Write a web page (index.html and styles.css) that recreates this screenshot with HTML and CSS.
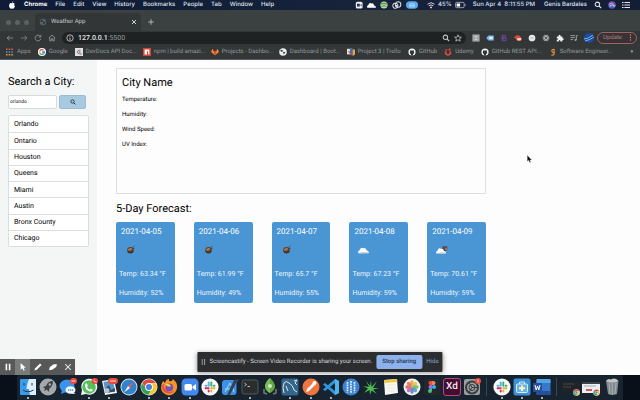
FILE: index.html
```html
<!DOCTYPE html>
<html lang="en">
<head>
<meta charset="utf-8">
<title>Weather App</title>
<link rel="stylesheet" href="styles.css">
</head>
<body>
<svg class="defs" aria-hidden="true">
  <symbol id="chrome" viewBox="0 0 18 18"><circle cx="9" cy="9" r="8.5" fill="#e8e9e4"/><path d="M2.3 5A7.8 7.8 0 0 1 15.7 5L9 5.2 5.8 11z" fill="#df4a3b"/><path d="M2 5.400A7.800 7.800 0 0 0 8.500 16.800L12 11 6 10.500z" fill="#35a156"/><path d="M16 5.400A7.800 7.800 0 0 1 8.500 16.800L12.300 10 11 5.400z" fill="#f6c934"/><circle cx="9" cy="9" r="3.900" fill="#fff"/><circle cx="9" cy="9" r="3" fill="#4480e0"/></symbol>
  <symbol id="slack" viewBox="0 0 18 18"><circle cx="9" cy="9" r="8.600" fill="#fafafa"/><g stroke-width="2" stroke-linecap="round"><path d="M7.700 4.500V7.700M4.500 7.700H5.500" stroke="#4fb9df"/><path d="M10.300 4.500V7.700M13.500 7.700H12.700" stroke="#3bae82"/><path d="M10.300 10.300H13.500M10.300 13.500V12.700" stroke="#e5b13b"/><path d="M4.500 10.300H7.700M7.700 13.500V12.700" stroke="#d32e60"/></g></symbol>
  <symbol id="github" viewBox="0 0 10 10"><circle cx="5" cy="5" r="4.500" fill="#f2f2f2"/><path d="M3.700 9.300V7.600C2 7 2 4.800 2.800 4.100L2.700 2.700 4 3.200H6L7.300 2.700 7.200 4.100C8 5 8 7 6.300 7.600V9.300z" fill="#303334"/></symbol>
  <symbol id="search" viewBox="0 0 10 10"><circle cx="4.200" cy="4.200" r="2.800" fill="none" stroke="currentColor" stroke-width="1.300"/><path d="M6.300 6.300L9 9" stroke="currentColor" stroke-width="1.500"/></symbol>
  <symbol id="ball" viewBox="0 0 12 12"><path d="M8 3.500L10 2M8.500 4.700L10 4.300" stroke="#4b4a50"/><circle cx="6" cy="6.300" r="3.300" fill="#5a4030"/><path d="M3.300 5.500Q5 3.300 7.600 4.300L7 6.300 4 6.700z" fill="#ad7a4c"/><path d="M3.200 7.500Q6 10 8.700 7.500" stroke="#2d2d35" fill="none"/></symbol>
  <symbol id="cloud" viewBox="0 0 14 9"><path d="M1.500 8Q.5 5.500 3 4.500Q4 1 7 2.500Q9.500 2 10.500 5Q13.500 6 12.500 8z" fill="#fcfcfc"/><path d="M2 8H12.500L11 6.700 5 7z" fill="#c6ccd1"/></symbol>
</svg>

<header class="menubar">
  <nav class="menus">
    <svg class="ico" viewBox="0 0 10 10"><path d="M6.600.3Q6.500 2 4.900 2.200Q5 .7 6.600.3M5 2.800Q7.200 1.700 8.400 3.400Q6.500 5 8.800 6.600Q7.400 9.800 6.300 9.600Q5 9 4 9.600C2.300 10 .8 6.700 1.600 4.500Q2.600 2.100 5 2.800" fill="#fff"/></svg>
    <b>Chrome</b><span>File</span><span>Edit</span><span>View</span><span>History</span><span>Bookmarks</span><span>People</span><span>Tab</span><span>Window</span><span>Help</span>
  </nav>
  <div class="status">
    <svg class="ico" viewBox="0 0 10 10"><rect x="1" y="1" width="8.500" height="8.500" rx="2" fill="#eee"/><path d="M2.500 3.500H6V7H2.500zM6.500 5L8.200 3.800V6.800z" fill="#26304a"/></svg>
    <svg class="ico wide" viewBox="0 0 14 9"><use href="#cloud"/></svg>
    <svg class="ico" viewBox="0 0 10 10"><circle cx="5" cy="5" r="4.500" fill="#b9d8a4"/><path d="M1 4Q5 2 9 4M2 7Q5 5 8 7" stroke="#4c9549" stroke-width="1.400" fill="none"/></svg>
    <svg class="ico wide" viewBox="0 0 14 10"><circle cx="5.500" cy="6" r="3.200" fill="none" stroke="#d7dbe1" stroke-width="1.300"/><circle cx="9" cy="4.500" r="3.500" fill="none" stroke="#d7dbe1" stroke-width="1.300"/><circle cx="7" cy="6" r="1" fill="#fff"/></svg>
    <svg class="ico pill" viewBox="0 0 16 10"><rect width="16" height="10" rx="5" fill="#5aaaf0"/><path d="M5 3.500V7.500H11V3.500z" fill="none" stroke="#c1e0fa"/><path d="M5 5.500H11" stroke="#c1e0fa"/></svg>
    <svg class="ico" viewBox="0 0 10 10"><path d="M.7 4Q5 .3 9.300 4M2.300 6Q5 3.800 7.700 6" fill="none" stroke="#ddd" stroke-width="1.200"/><circle cx="5" cy="8" r="1.200" fill="#ddd"/></svg>
    <span>45%</span>
    <svg class="ico wide" viewBox="0 0 14 8"><rect x=".6" y=".6" width="11" height="6.800" rx="1.500" fill="none" stroke="#bbc0c8"/><path d="M2 2H6.500V6H2z" fill="#fff"/><path d="M13 3V5" stroke="#bbc0c8"/></svg>
    <span class="clock">Sun Apr 4&nbsp; 8:11:55 PM</span>
    <span class="user">Genis Bardales</span>
    <svg class="ico end"><use href="#search"/></svg>
    <svg class="ico end" viewBox="0 0 10 10"><circle cx="5" cy="5" r="4.700" fill="#525ab5"/><path d="M1.500 5Q4 1 6 4T9 5" stroke="#ef77b2" stroke-width="1.700" fill="none"/><path d="M2 7Q5 3 8 7" stroke="#80e5ee" stroke-width="1.400" fill="none"/></svg>
    <svg class="ico end" viewBox="0 0 10 10"><path d="M0 2H2M3 2H10M0 5H2M3 5H10M0 8H2M3 8H10" stroke="#e5e7eb" stroke-width="1.300"/></svg>
  </div>
</header>

<div class="tabstrip">
  <div class="lights"><i></i><i></i><i></i></div>
  <div class="tab">
    <svg class="ico" viewBox="0 0 10 10"><circle cx="5" cy="5" r="4" fill="#55656a"/><path d="M2 3L5 2 4 5 2 5M6 4L8 5 6 8 5 6z" fill="#252e31"/></svg>
    <span>Weather App</span>
    <button class="plain" aria-label="Close tab"><svg class="mini" viewBox="0 0 6 6"><path d="M1 1L5 5M5 1L1 5" stroke="#d0d2d3"/></svg></button>
  </div>
  <button class="plain" aria-label="New tab"><svg class="mini" viewBox="0 0 6 6"><path d="M3 .3V5.700M.3 3H5.700" stroke="#aeb2b3"/></svg></button>
</div>

<div class="toolbar">
  <div class="nav">
    <button class="plain" aria-label="Back"><svg class="ico" viewBox="0 0 10 10"><path d="M9 5H1.500M4.500 2L1.500 5 4.500 8" fill="none" stroke="#9a9d9e"/></svg></button>
    <button class="plain" aria-label="Forward"><svg class="ico" viewBox="0 0 10 10"><path d="M1 5H8.500M5.500 2L8.500 5 5.500 8" fill="none" stroke="#85898a"/></svg></button>
    <button class="plain" aria-label="Reload"><svg class="ico" viewBox="0 0 10 10"><path d="M8 3A3.600 3.600 0 1 0 8.500 6M8.500 1V3.800H5.700" fill="none" stroke="#9a9d9e"/></svg></button>
    <button class="plain" aria-label="Home"><svg class="ico" viewBox="0 0 10 10"><path d="M1 5L5 1.300 9 5M2.300 4.500V8.700H4V6H6V8.700H7.700V4.500" fill="none" stroke="#9a9d9e"/></svg></button>
  </div>
  <div class="address">
    <svg class="ico" viewBox="0 0 10 10"><circle cx="5" cy="5" r="4" fill="none" stroke="#d5d7d8"/><path d="M5 4.500V7.500M5 2.500V3.500" stroke="#d5d7d8"/></svg>
    <span class="url"><b>127.0.0.1</b>:5500</span>
    <svg class="ico"><use href="#search"/></svg>
    <svg class="ico" viewBox="0 0 10 10"><path d="M5 1L6.200 3.900 9.300 4 6.900 6 7.700 9 5 7.300 2.300 9 3.100 6 .7 4 3.800 3.900z" fill="none" stroke="#c2c5c6"/></svg>
  </div>
  <div class="ext">
    <svg class="ico" viewBox="0 0 10 10"><rect x=".5" y=".5" width="9" height="9" fill="#a3a5a5"/><path d="M3 3H7M3 7H7M5 3V7" stroke="#d3d4d4"/></svg>
    <svg class="ico" viewBox="0 0 10 10"><path d="M.3 5L3 1.800H9.700V8.200H3z" fill="#76b4ef"/><path d="M4 3.500H8.500V6.500H4z" fill="#e6f2fd"/></svg>
    <svg class="ico" viewBox="0 0 10 10"><path d="M3 1V9M3 2H6.500V4.700H3M3 5H7.500V8H3" fill="none" stroke="#5c479b" stroke-width="1.500"/><path d="M2 5H5" stroke="#b33c62" stroke-width="1.500"/></svg>
    <svg class="ico" viewBox="0 0 10 10"><path d="M0 4L3 1.500 7 2 10 6 7 9 4 8z" fill="#d64c38"/><path d="M4 5H9V8H4z" fill="#f1cbc2"/></svg>
    <svg class="ico" viewBox="0 0 10 10"><circle cx="5" cy="5" r="4.200" fill="#e6e6e6"/><path d="M3 5H7" stroke="#aaa"/></svg>
    <svg class="ico" viewBox="0 0 10 10"><g fill="none" stroke="#aeb3b5"><ellipse cx="5" cy="5" rx="4" ry="1.700"/><ellipse cx="5" cy="5" rx="4" ry="1.700" transform="rotate(60 5 5)"/><ellipse cx="5" cy="5" rx="4" ry="1.700" transform="rotate(120 5 5)"/></g></svg>
    <svg class="ico" viewBox="0 0 10 10"><path d="M1 3H3.200Q3 .8 4.500 .8T5.800 3H8V5.200Q9.800 5 9.800 6.300T8 7.500V9.500H5.800Q5.500 7.500 4.500 7.500T3.200 9.500H1V7.200Q2.800 7 2.800 6.200T1 5.200z" fill="#f2f2f2"/></svg>
    <svg class="ico" viewBox="0 0 10 10"><path d="M.5 2H6.500M.5 4.500H6.500M.5 7H4M8 2V7.500M8 2H10" stroke="#a8abac"/><circle cx="7" cy="7.500" r="1.200" fill="#a8abac"/></svg>
    <svg class="ico avatar" viewBox="0 0 10 10"><circle cx="5" cy="5" r="5" fill="#1d4ba0"/><path d="M0 6Q4 6 9 2M1 8Q6 7 10 4" stroke="#7db1ed" fill="none"/></svg>
    <button class="update">Update <svg class="dots" viewBox="0 0 4 10"><circle cx="2" cy="1.500" r="1"/><circle cx="2" cy="5" r="1"/><circle cx="2" cy="8.500" r="1"/></svg></button>
  </div>
</div>

<nav class="bookmarks">
  <a href="#"><svg class="ico" viewBox="0 0 10 10"><g stroke-width="2" stroke-dasharray="2 1.300"><path d="M0 1.500H10" stroke="#df5949"/><path d="M0 5H10" stroke="#4c90c7"/><path d="M0 8.500H10" stroke="#d69c49"/></g></svg>Apps</a>
  <a href="#"><svg class="ico" viewBox="0 0 10 10"><circle cx="5" cy="5" r="5" fill="#fff"/><g fill="none" stroke-width="1.600"><path d="M2.400 3.600A3 3 0 0 1 7 2.700" stroke="#e14a3b"/><path d="M2.400 3.600A3 3 0 0 0 2.500 6.600" stroke="#f2ba2b"/><path d="M2.500 6.600A3 3 0 0 0 7 7.300" stroke="#34a853"/><path d="M7 7.300Q8 6.300 8 5H5" stroke="#4285f4"/></g></svg>Google</a>
  <a href="#"><svg class="ico" viewBox="0 0 10 10"><rect width="10" height="10" fill="#e2e2e2"/><path d="M5 3A2 2 0 1 0 5 7M6 2V7.500H8.500" fill="none" stroke="#636363"/></svg><span class="cut">DevDocs API Doc...</span></a>
  <a href="#"><svg class="ico" viewBox="0 0 10 10"><rect width="10" height="10" fill="#d94232"/><path d="M2 2H8V8H6.500V4H5V8H2z" fill="#fff"/></svg><span class="cut">npm | build amazi...</span></a>
  <a href="#"><svg class="ico" viewBox="0 0 10 10"><path d="M0 5L2 .8 3.500 4H6.500L8 .8 10 5 5 9z" fill="#f2863a"/><path d="M3 4H7L5 9z" fill="#dd4930"/></svg><span class="cut">Projects - Dashbo...</span></a>
  <a href="#"><svg class="ico" viewBox="0 0 10 10"><circle cx="5" cy="5" r="4.700" fill="#eee"/><path d="M2 2L5 3 4 5 2 4M5 5L8 5 6 8z" fill="#343738"/></svg><span class="cut">Dashboard | Boot...</span></a>
  <a href="#"><svg class="ico" viewBox="0 0 10 10"><path d="M0 1H4V8H0z" fill="#ebdfcf"/><path d="M4 0H7V9H4z" fill="#3a70bc"/><path d="M7 2H10V8L7 10z" fill="#e8a64c"/><path d="M2 4L5 8" stroke="#d55545" stroke-width="1.500"/></svg>Project 3 | Trello</a>
  <a href="#"><svg class="ico"><use href="#github"/></svg>GitHub</a>
  <a href="#"><svg class="ico" viewBox="0 0 10 10"><path d="M2 4V7Q5 10 8 7V4M2 2L4 3M6 3L8 1" fill="none" stroke="#df4c3f" stroke-width="2"/></svg>Udemy</a>
  <a href="#"><svg class="ico"><use href="#github"/></svg><span class="cut">GitHub REST API...</span></a>
  <a href="#"><svg class="ico" viewBox="0 0 10 10"><path d="M6.500 5.500A2 2 0 1 1 6.500 2V7Q6 9.500 3 8.500" fill="none" stroke="#d4883e" stroke-width="1.600"/></svg><span class="cut">Software Engineer...</span></a>
  <span class="more">»</span>
</nav>

<main class="page">
  <aside class="sidebar">
    <h2><label for="city">Search a City:</label></h2>
    <form class="search">
      <input id="city" type="text" value="orlando">
      <button type="button" aria-label="Search"><svg class="glass"><use href="#search"/></svg></button>
    </form>
    <ul class="cities"><li>Orlando</li><li>Ontario</li><li>Houston</li><li>Queens</li><li>Miami</li><li>Austin</li><li>Bronx County</li><li>Chicago</li></ul>
  </aside>
  <section class="content">
    <article class="current">
      <h2>City Name</h2>
      <p>Temperature:</p><p>Humidity:</p><p>Wind Speed:</p><p>UV Index:</p>
    </article>
    <h2 class="title">5-Day Forecast:</h2>
    <div class="forecast">
      <article class="day"><h3>2021-04-05</h3><svg class="weather"><use href="#ball"/></svg><p>Temp: 63.34 °F</p><p>Humidity: 52%</p></article>
      <article class="day"><h3>2021-04-06</h3><svg class="weather"><use href="#ball"/></svg><p>Temp: 61.99 °F</p><p>Humidity: 49%</p></article>
      <article class="day"><h3>2021-04-07</h3><svg class="weather"><use href="#ball"/></svg><p>Temp: 65.7 °F</p><p>Humidity: 55%</p></article>
      <article class="day"><h3>2021-04-08</h3><svg class="weather"><use href="#cloud"/></svg><p>Temp: 67.23 °F</p><p>Humidity: 59%</p></article>
      <article class="day"><h3>2021-04-09</h3><svg class="weather" viewBox="0 0 14 10"><path d="M8 1L13 1 13.500 4 12 6H8z" fill="#594c48"/><path d="M11 3H13V5H11z" fill="#b87850"/><use href="#cloud" y="1" width="13" height="9"/></svg><p>Temp: 70.61 °F</p><p>Humidity: 59%</p></article>
    </div>
  </section>

  <div class="recorder">
    <button aria-label="Pause"><svg class="ico" viewBox="0 0 10 10"><path d="M3 1V9M7 1V9" stroke="#fff" stroke-width="2"/></svg></button>
    <button class="on" aria-label="Pointer"><svg class="ico" viewBox="0 0 10 10"><path d="M2 0L8.500 6H5.800L7.200 9.200 5.700 9.800 4.300 6.700 2 8.500z" fill="#fff"/></svg></button>
    <button aria-label="Pen"><svg class="ico" viewBox="0 0 10 10"><path d="M.5 9.500L1.500 6.500 7.500.5 9.500 2.500 3.500 8.500z" fill="#fff"/></svg></button>
    <button aria-label="Eraser"><svg class="ico" viewBox="0 0 10 10"><path d="M0 9L1 5 6 1.500H10L9 5 4 8.500z" fill="#fff"/></svg></button>
    <button aria-label="Close"><svg class="ico" viewBox="0 0 10 10"><path d="M1.500 1.500L8.500 8.500M8.500 1.500L1.500 8.500" stroke="#e2e2e2" stroke-width="1.300"/></svg></button>
  </div>
  <div class="sharing">
    <svg class="bars" viewBox="0 0 4 6"><path d="M.7 0V6M3.300 0V6" stroke="#b0b2b4"/></svg>
    <span>Screencastify - Screen Video Recorder is sharing your screen.</span>
    <button class="stop">Stop sharing</button>
    <button class="hide">Hide</button>
  </div>
  <svg class="cursor" viewBox="0 0 5 8"><path d="M.3.300V6.300L1.700 5.200 2.700 7.600 3.700 7.100 2.800 4.900H4.700z" fill="#111" stroke="#bbb" stroke-width=".3"/></svg>
</main>

<footer class="desk">
  <div class="dock">
    <svg class="app run" viewBox="0 0 18 18"><rect x="1" y="1" width="16" height="16" rx="1" fill="#3a9bea"/><path d="M10 1H17V17H11Q10 14 10 11H7.500Q8 5 10 1" fill="#dfeefa"/><path d="M5 5V7.500M13 5V7.500M4 12Q9 15.500 14.500 12" fill="none" stroke="#1b3855"/></svg>
    <svg class="app" viewBox="0 0 18 18"><circle cx="9" cy="9" r="8.500" fill="#a5a8aa"/><path d="M14 3Q9 3 7 8L4 9 6 10.500 5 13 8 11.500 9.500 14 10.500 10.500Q14 8 14 3" fill="#3b4044"/><circle cx="10.800" cy="6.500" r="1.200" fill="#aaa"/></svg>
    <svg class="app" viewBox="0 0 18 18"><ellipse cx="8" cy="8" rx="7.500" ry="6.500" fill="#3c94ea"/><path d="M3 12L2 16 7 14" fill="#3c94ea"/><ellipse cx="11.500" cy="12" rx="5" ry="3.800" fill="#f3f8fd"/><path d="M14 14L16.500 16 12 15.500" fill="#f3f8fd"/><path d="M9 12H14.500" stroke="#4b8fcc" stroke-width="1.300" stroke-dasharray="1.300 .7"/><rect x="11" y="0" width="7" height="6" rx="3" fill="#ea4a3f"/><path d="M12.500 3H16.500" stroke="#f7aaa4" stroke-width="1.500"/></svg>
    <svg class="app run" viewBox="0 0 18 18"><path d="M1 17L2 12A8 8 0 1 1 6 16z" fill="#f3f7f2"/><circle cx="9" cy="9" r="6.800" fill="#55be5d"/><path d="M6 5L8 7.500 7 9Q8 11 10 11.500L11 10.500 13 12Q12 14 10 13.500Q5 12 5 7z" fill="#fff"/><rect x="11.500" y="0" width="6.500" height="6" rx="3" fill="#ea4a3f"/><path d="M14 1.500V3.500H16V5" fill="none" stroke="#ffc3bd" stroke-width=".8"/></svg>
    <svg class="app run" viewBox="0 0 18 18"><path d="M2 3L14 1 17 15 5 17z" fill="#f1f3f4"/><path d="M3.500 4L13 2.500 15 13.500 5.500 15z" fill="#5795cc"/><path d="M5 11L9 7 11 12 15 10V13.500L6 15z" fill="#344b65"/><circle cx="7" cy="12.500" r="2.500" fill="#b7c2ca"/><rect x="8" y="0" width="10" height="6" rx="3" fill="#e94b3d"/><path d="M10 3H16" stroke="#f7aaa4" stroke-width="1.500"/></svg>
    <svg class="app" viewBox="0 0 18 18"><circle cx="9" cy="9" r="8.500" fill="#d7e2e9"/><circle cx="9" cy="9" r="7.600" fill="#3083cc"/><path d="M14 3.500L8 8 10 10z" fill="#ed594b"/><path d="M8 8L10 10 4 14.500z" fill="#f2f4f4"/></svg>
    <svg class="app run"><use href="#chrome"/></svg>
    <svg class="app run" viewBox="0 0 18 18"><path d="M3 3L5 5Q6 1 9 1L9 3Q12 4 13 1Q19 6 16.500 12A8 8 0 0 1 1 10Q1 6 3 3" fill="#f79424"/><path d="M2 9A7 7 0 0 0 15 12Q10 16 6 12T5 6Q2 6 2 9" fill="#ed4c3f"/><circle cx="9.300" cy="9.500" r="3.900" fill="#7652bf"/><path d="M5 6Q9 5 11 8Q9 9 7 8" fill="#ffcf45"/></svg>
    <svg class="app run" viewBox="0 0 18 18"><rect x=".5" y=".5" width="17" height="17" rx="4.500" fill="#4388ee"/><rect x="3.500" y="6" width="7.500" height="6.500" rx="1.500" fill="#fff"/><path d="M11.500 8.500L15 6V12.500L11.500 10z" fill="#fff"/></svg>
    <svg class="app"><use href="#slack"/></svg>
    <svg class="app" viewBox="0 0 18 18"><rect x="1" y="2" width="14.500" height="15" rx="3" fill="#3b93e5"/><path d="M4 14L9 5 13 14M4 11H13" stroke="#a9d4f6" fill="none"/><path d="M6 17L13 2 17 1 18 3 15.500 4 9 17z" fill="#344352"/></svg>
    <svg class="app run" viewBox="0 0 18 18"><rect x="1" y="2" width="16" height="14" rx="2" fill="#292d2e" stroke="#55595a"/><path d="M3.500 5L5.500 6.500 3.500 8M6.500 8.500H9" fill="none" stroke="#ddd" stroke-width=".8"/></svg>
    <svg class="app" viewBox="0 0 18 18"><path d="M9 0Q14 4 14 9Q13 13 9 15Q5 13 4 9Q4 4 9 0" fill="#61a444"/><path d="M9 0V15Q5 13 4 9Q4 4 9 0" fill="#78bd55"/><circle cx="9" cy="8" r="2" fill="#d5e7c9"/><path d="M3 11V15L6 16M15 11V15L12 16" fill="none" stroke="#71807a" stroke-width="1.500"/></svg>
    <svg class="app run" viewBox="0 0 18 18"><rect x=".5" y=".5" width="17" height="17" rx="2" fill="#34658a"/><path d="M3 15Q1 9 3 5Q5 2 8 5Q12 7 13 12L16 14M13 3L16 2 14 5 16 7M5 8L7 13" fill="none" stroke="#dbe8f2"/></svg>
    <svg class="app run" viewBox="0 0 18 18"><circle cx="9" cy="9" r="8.500" fill="#ef7540"/><path d="M4 14L5 11 11 5 13 7 7 13z" fill="#fff"/><circle cx="12.500" cy="5" r="2" fill="#fff"/></svg>
    <svg class="app run" viewBox="0 0 18 18"><path d="M13 1L17 3V15L13 17 1 6.500 3 5 13 13V5L3 13 1 11.500z" fill="#3296db"/><path d="M13 1L17 3V15L13 17z" fill="#50b5ee"/></svg>
    <svg class="app" viewBox="0 0 18 18"><circle cx="9" cy="9" r="8.500" fill="#3e83cf"/><g stroke="#e5f1fb" stroke-width="1.700" stroke-dasharray="1.700 .8"><path d="M5.500 4V14.500M9 3V15.500M12.500 4V14.500"/></g></svg>
    <svg class="app" viewBox="0 0 18 18"><path d="M9 2L9.500 9 15 3 11 10 17 10 11 11.500 15 16 9.500 12.500 8 17 7.500 12 2 15 6 10.500 1 8 7 9 4 3 8 8z" fill="#51bd4c"/></svg>
    <svg class="app" viewBox="0 0 18 18"><path d="M2 2L15 1 16 15 3 17z" fill="#f8f7f1"/><path d="M2 2L15 1 15.300 4 2.300 5z" fill="#f0c645"/><path d="M5 7H13M5 10H13M5 13H13" stroke="#ddd" stroke-width=".6"/></svg>
    <svg class="app" viewBox="0 0 18 18"><circle cx="9" cy="9" r="8.500" fill="#f3f1eb"/><g stroke-width="3.300" stroke-linecap="round" opacity=".85"><path d="M9 4V7" stroke="#f09b39"/><path d="M12.500 5.500L11 7" stroke="#d8c938"/><path d="M14 9H11" stroke="#74b951"/><path d="M12.500 12.500L11 11" stroke="#429fab"/><path d="M9 14V11" stroke="#5577cc"/><path d="M5.500 12.500L7 11" stroke="#a464bc"/><path d="M4 9H7" stroke="#d9596d"/><path d="M5.500 5.500L7 7" stroke="#ec6b44"/></g></svg>
    <svg class="app" viewBox="0 0 18 18"><rect x="1" y="1" width="16" height="16" rx="3" fill="#22282b"/><path d="M9 3H7.500A2 2 0 0 0 7.500 7H9" fill="#ed5134"/><path d="M9 3H10.500A2 2 0 0 1 10.500 7H9" fill="#f28068"/><path d="M9 7H7.500A2 2 0 0 0 7.500 11H9" fill="#a269ea"/><circle cx="11" cy="9" r="2" fill="#37b4eb"/><path d="M9 11H7.500A2 2 0 1 0 9 13" fill="#3bc47e"/></svg>
    <span class="app xd">Xd</span>
    <svg class="app" viewBox="0 0 18 18"><rect x="1" y="1" width="16" height="16" rx="2" fill="#9b9fa1"/><circle cx="9" cy="9.500" r="6" fill="none" stroke="#3a3d3f" stroke-width="2"/><circle cx="9" cy="9.500" r="3" fill="none" stroke="#3a3d3f"/><path d="M9 9.500H15M9 9.500L6 4.500M9 9.500L6 14.500" stroke="#3a3d3f"/><circle cx="15" cy="3" r="3" fill="#ed4b40"/><path d="M15 1.500V4.500" stroke="#fff" stroke-width=".7"/></svg>
    <i class="sep"></i>
    <svg class="app run"><use href="#slack"/></svg>
    <svg class="app run" viewBox="0 0 18 18"><rect x=".5" y=".5" width="17" height="17" rx="2" fill="#3d91d6"/><path d="M6.500 6V4H11.500V6" fill="none" stroke="#d8edfa"/><rect x="3.500" y="6" width="11" height="8.500" rx="1" fill="#67b2e8" stroke="#d8edfa"/><path d="M9 7.500V13M6 10.200H12" stroke="#fff1bd" stroke-width="2"/></svg>
    <svg class="app run" viewBox="0 0 18 18"><rect x="3.500" y="1" width="14" height="16" rx="1" fill="#3877c9"/><path d="M3.500 2Q3.500 1 4.500 1H16.500Q17.500 1 17.500 2V5H3.500z" fill="#54a4e8"/><path d="M3.500 13H17.500V17H3.500z" fill="#225099"/><rect x="0" y="5" width="9" height="9" rx="1" fill="#244f9f"/><path d="M2 7L3.200 12 4.500 8 5.800 12 7 7" fill="none" stroke="#fff"/></svg>
    <i class="sep"></i>
    <svg class="app" viewBox="0 0 18 18"><path d="M0 4H18V14H0z" fill="#202426"/><path d="M1 6H12M1 9H9" stroke="#42484b"/><use href="#chrome" x="11" y="11" width="7" height="7"/></svg>
    <svg class="app" viewBox="0 0 18 18"><path d="M0 4H18V15H0z" fill="#edf0f2"/><path d="M0 5H18" stroke="#3c4347" stroke-width="2"/><path d="M2 8H14" stroke="#9eacb7"/><path d="M4 12H10" stroke="#d95550" stroke-width="2"/><use href="#chrome" x="11" y="11" width="7" height="7"/></svg>
    <svg class="app" viewBox="0 0 18 18"><path d="M3 3H15.500L14 16Q9 18 5 16z" fill="#82898c"/><path d="M6 5L7 16M9.300 5V17M13 5L12 16" stroke="#a9b0b3"/><path d="M3 3Q5 0 8 1.500Q12-1 15.500 3Q9 6 3 3" fill="#c1c5c7"/></svg>
  </div>
</footer>
</body>
</html>
```
FILE: styles.css
```css
* { box-sizing: border-box; }
body {
  margin: 0;
  min-height: 100vh;
  display: flex;
  flex-direction: column;
  font-family: Roboto, "Liberation Sans", sans-serif;
  font-size: 6px;
  line-height: 8px;
  text-rendering: geometricPrecision;
  color: #000;
  background: #111922;
}
h2, h3, p, ul { margin: 0; padding: 0; }
button, input { font: inherit; text-rendering: inherit; padding: 0; margin: 0; }
svg, i { display: block; flex: none; }
.defs { position: absolute; width: 0; height: 0; }
.ico { width: 8px; height: 8px; }
.plain { display: block; border: 0; background: none; }

.menubar {
  display: flex;
  justify-content: space-between;
  align-items: center;
  height: 10px;
  padding: 0 10px 0 8px;
  font-family: Inter, sans-serif;
  font-weight: 500;
  color: #dfe3e9;
  background: linear-gradient(90deg, #0f1b36, #17223b 60%, #131d33);
}
.menus { display: flex; gap: 8px; white-space: nowrap; }
.menus b { color: #fff; }
.status { display: flex; align-items: center; gap: 3px; white-space: nowrap; }
.status .wide { width: 11px; }
.status .pill { width: 12px; margin: 0 6px 0 1px; }
.clock { margin: 0 6px 0 4px; }
.user { margin-right: 1px; }
.status .end { width: 8px; margin-left: 3px; }

.tabstrip {
  display: flex;
  align-items: center;
  gap: 7px;
  height: 21px;
  padding: 3px 8px 0 6px;
  background: #3b4141;
}
.lights { display: flex; gap: 4px; width: 22px; }
.lights i { width: 5px; height: 5px; border-radius: 50%; background: #5c6162; }
.tab {
  display: flex;
  align-items: center;
  gap: 4px;
  width: 106px;
  height: 18px;
  padding: 0 4px;
  border-radius: 4px 4px 0 0;
  color: #c6c9ca;
  background: #333637;
}
.tab span { flex: 1; }
.mini { width: 6px; height: 6px; }

.toolbar {
  display: flex;
  align-items: center;
  gap: 4px;
  height: 13px;
  padding: 0 3px 0 6px;
  background: #333637;
}
.nav { display: flex; gap: 6px; width: 52px; }
.address {
  flex: 1;
  display: flex;
  align-items: center;
  gap: 4px;
  height: 12px;
  padding: 0 4px;
  border-radius: 6px;
  color: #c2c5c6;
  background: #1f2223;
}
.url { flex: 1; font-size: 7px; color: #989c9e; }
.url b { font-weight: 500; color: #e6e8e9; }
.ext { display: flex; align-items: center; gap: 6px; padding-left: 2px; }
.avatar { width: 10px; height: 10px; }
.update {
  display: flex;
  align-items: center;
  justify-content: space-between;
  width: 40px;
  height: 12px;
  margin-left: -3px;
  padding: 0 4px 0 5px;
  border: 1px solid #9c6266;
  border-radius: 6px;
  color: #b07f83;
  background: #373334;
}
.dots { width: 3px; height: 7px; fill: #df7e7c; }

.bookmarks {
  display: flex;
  align-items: center;
  gap: 7px;
  height: 16px;
  padding: 0 7px 0 6px;
  white-space: nowrap;
  color: #94989a;
  background: #343738;
  border-bottom: 1px solid #595c5d;
}
.bookmarks a { display: flex; align-items: center; gap: 3px; color: inherit; text-decoration: none; }
.cut { width: 50px; }
.more { margin-left: auto; color: #ddd; }

.page {
  position: relative;
  flex: 1;
  display: grid;
  grid-template-columns: 97px 1fr;
  background: #fdfdfd;
}
.page h2 { font-size: 11px; line-height: 14px; font-weight: 400; -webkit-text-stroke: thin; -webkit-text-stroke-width: 0; }
.sidebar { padding: 15px 8px 0; background: #f4f6f6; }
.search { display: flex; gap: 2px; margin-top: 6px; }
.search input {
  width: 49px;
  height: 14px;
  padding: 0 1px;
  border: 1px solid #d9dbdb;
  border-radius: 2px;
  font-size: 5px;
  color: #222;
  background: #fff;
}
.search button {
  display: grid;
  place-items: center;
  width: 27px;
  height: 14px;
  border: 1px solid #98bdd7;
  border-radius: 2px;
  color: #15202b;
  background: #a8cae0;
}
.glass { width: 6px; height: 6px; }
.cities {
  display: grid;
  grid-auto-rows: 1fr;
  min-height: 132px;
  margin-top: 6px;
  border: 1px solid #dcdddd;
  border-radius: 2px;
  list-style: none;
  font-size: 7px;
  background: #fff;
}
.cities li { display: flex; align-items: center; padding-left: 5px; }
.cities li + li { border-top: 1px solid #dcdddd; }

.content { width: 389px; max-width: 100%; padding: 8px 0 0 19px; }
.current {
  height: 126px;
  padding: 7px 5px;
  border: 1px solid #dedfdf;
}
.current p { margin-top: 7px; }
.current h2 { margin-bottom: -1px; }
.title { margin-top: 8px; }
.forecast { display: grid; grid-template-columns: repeat(5, 1fr); gap: 19px; margin-top: 6px; }
.day {
  padding: 5px 3px 6px;
  border-radius: 2px;
  font-size: 7px;
  white-space: nowrap;
  color: #f0f6fb;
  background: #4a95d3;
}
.day h3 { padding-left: 2px; font-size: 8px; line-height: 9px; font-weight: 400; color: #fff; }
.weather { width: 13px; height: 12px; margin: 8px 0 14px 5px; }
.day p + p { margin-top: 11px; }

.recorder {
  position: absolute;
  left: 0;
  bottom: 0;
  display: flex;
  background: #585858;
}
.recorder button {
  display: grid;
  place-items: center;
  width: 15px;
  height: 16px;
  border: 0;
  background: none;
}
.recorder .on { background: #7a7c7c; }
.sharing {
  position: absolute;
  left: 50%;
  bottom: 3px;
  transform: translateX(-50%);
  display: flex;
  align-items: center;
  gap: 4px;
  height: 20px;
  padding: 0 4px;
  border-radius: 1px;
  white-space: nowrap;
  color: #d7d9db;
  background: #2b2d2f;
  box-shadow: 0 1px 5px #0006;
}
.bars { width: 4px; height: 6px; }
.stop {
  width: 46px;
  height: 14px;
  border: 0;
  border-radius: 2px;
  font-weight: 500;
  color: #25364f;
  background: #8db1ec;
}
.hide { border: 0; color: #83a8dc; background: none; }
.cursor { position: absolute; left: 527px; top: 95px; width: 5px; height: 8px; }

.desk { height: 25px; padding: 0 17px; background: #0a1019; }
.dock {
  display: flex;
  justify-content: space-between;
  height: 25px;
  padding: 3px 2px 4px;
  border-radius: 3px 3px 0 0;
  background: #17232f;
}
.app { width: 18px; height: 18px; overflow: visible; }
.run { height: 22px; padding-bottom: 4px; background: radial-gradient(circle at 50% 20px, #aab3ba 0 1px, transparent 1px); }
.sep { width: 7px; height: 18px; background: linear-gradient(90deg, transparent 3px, #3a4650 3px 4px, transparent 4px); }
.xd {
  border: 1px solid #b74788;
  border-radius: 3px;
  font-size: 10px;
  line-height: 16px;
  font-weight: 500;
  text-align: center;
  color: #fbe4f2;
  background: #41102f;
}
```
